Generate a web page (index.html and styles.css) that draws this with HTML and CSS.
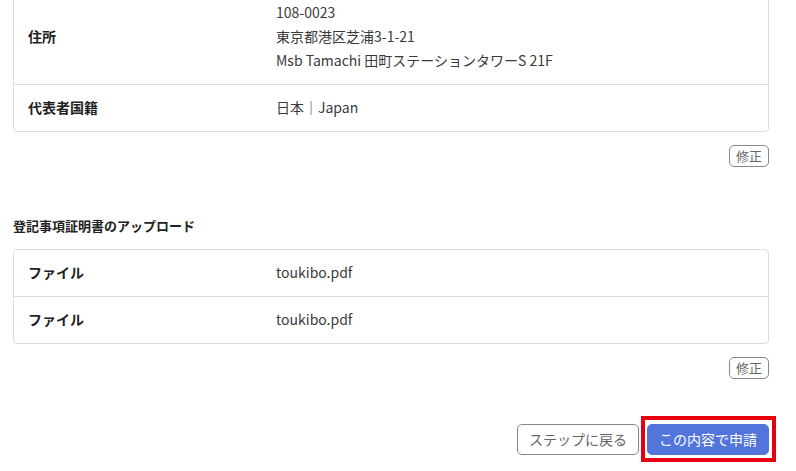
FILE: index.html
```html
<!DOCTYPE html>
<html lang="ja">
<head>
    <meta charset="UTF-8">
    <title>申請内容の確認</title>
    <link rel="stylesheet" href="styles.css">
</head>
<body>
    <div class="page">
        <div class="card card-top">
            <div class="row">
                <div class="label">住所</div>
                <div class="value">
                    108-0023<br>
                    東京都港区芝浦3-1-21<br>
                    Msb Tamachi 田町ステーションタワーS 21F
                </div>
            </div>
            <div class="row">
                <div class="label">代表者国籍</div>
                <div class="value">日本｜Japan</div>
            </div>
        </div>
        <div class="edit-line">
            <button class="edit-btn">修正</button>
        </div>

        <h3 class="section-title">登記事項証明書のアップロード</h3>
        <div class="card">
            <div class="row">
                <div class="label">ファイル</div>
                <div class="value">toukibo.pdf</div>
            </div>
            <div class="row">
                <div class="label">ファイル</div>
                <div class="value">toukibo.pdf</div>
            </div>
        </div>
        <div class="edit-line">
            <button class="edit-btn">修正</button>
        </div>

        <div class="actions">
            <button class="btn btn-back">ステップに戻る</button>
            <span class="highlight">
                <button class="btn btn-submit">この内容で申請</button>
            </span>
        </div>
    </div>
</body>
</html>
```

FILE: styles.css
```css
body {
    margin: 0;
    padding: 0;
    background-color: #fff;
    font-family: "Noto Sans CJK JP", sans-serif;
    color: #333;
}
.page {
    width: 756px;
    margin-left: 13px;
}
.card {
    border: 1px solid #ddd;
    border-radius: 4px;
}
.card-top {
    margin-top: -11px;
}
.row {
    display: flex;
    padding: 10px 14px 12px;
    font-size: 14px;
    line-height: 24px;
    border-bottom: 1px solid #ddd;
}
.row:last-child {
    border-bottom: none;
}
.label {
    width: 248px;
    flex-shrink: 0;
    font-weight: bold;
    color: #222;
    display: flex;
    align-items: center;
}
.value {
    color: #3a3a3a;
}
.edit-line {
    display: flex;
    justify-content: flex-end;
    margin-top: 13px;
}
.edit-btn {
    font-family: inherit;
    font-size: 13px;
    color: #666;
    background: #fff;
    border: 1px solid #888;
    border-radius: 5px;
    height: 22px;
    width: 40px;
    padding: 0 0 1px;
    line-height: 20px;
}
.section-title {
    font-size: 13px;
    line-height: 20px;
    margin: 49px 0 13px;
    color: #222;
}
.actions {
    display: flex;
    justify-content: flex-end;
    align-items: center;
    margin-top: 37px;
}
.btn {
    font-family: inherit;
    font-size: 14px;
    width: 122px;
    height: 31px;
    border-radius: 5px;
    padding: 0 0 1px;
    cursor: pointer;
}
.btn-back {
    background: #fff;
    color: #666;
    border: 1px solid #888;
    margin-right: 2px;
}
.highlight {
    display: flex;
    border: 4px solid #e60012;
    padding: 4px 3px 3px 2px;
    margin-right: -7px;
}
.btn-submit {
    background: #5275dc;
    color: #fff;
    border: 1px solid #5275dc;
}
```
